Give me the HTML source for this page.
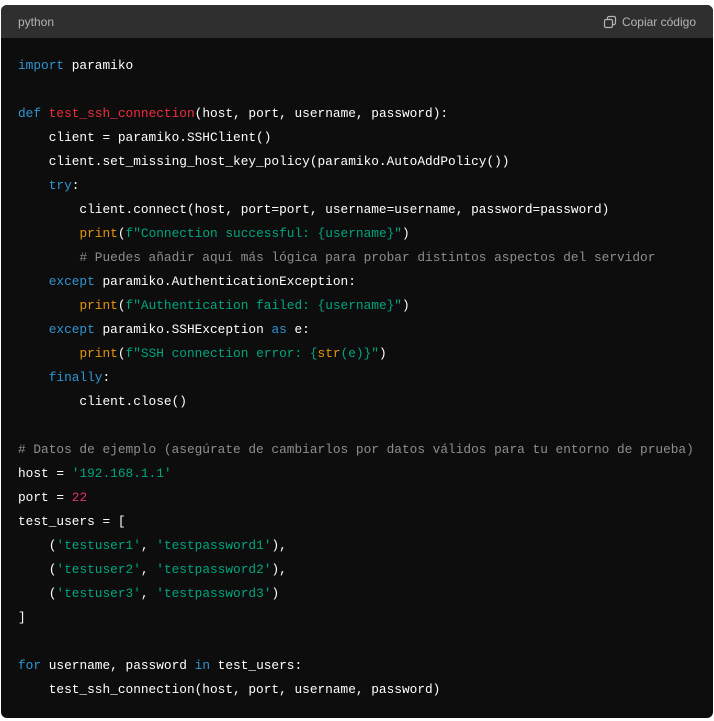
<!DOCTYPE html>
<html><head><meta charset="utf-8"><style>
html,body{margin:0;padding:0;background:#fff;width:714px;height:721px;overflow:hidden}
.box{position:absolute;left:1px;top:5px;width:712px;height:713px;border-radius:6px;overflow:hidden;background:#0d0d0d}
.hd{height:33px;background:#2f2f2f;font-family:"Liberation Sans",sans-serif;font-size:12px;color:#b4b4b4;position:relative}
.hd .l{position:absolute;left:17px;top:10px}
.hd .r{position:absolute;right:17px;top:10px}
.hd svg{position:absolute;left:-19px;top:0}
pre{margin:0;padding:16px 0 0 17px;font-family:"Liberation Mono",monospace;font-size:12.8px;line-height:24px;color:#fff;white-space:pre}
.k{color:#2e95d3}.f{color:#f22c3d}.s{color:#00a67d}.b{color:#e9950c}.n{color:#df3079}.c{color:#8e8e8e}
</style></head><body><div class="box">
<div class="hd"><span class="l">python</span><span class="r"><svg width="14" height="14" viewBox="0 0 14 14" fill="none" stroke="#b4b4b4" stroke-width="1.2"><rect x="1.5" y="4.5" width="8" height="8" rx="1.5"/><path d="M4.5 4.5V3a1.5 1.5 0 0 1 1.5-1.5h5A1.5 1.5 0 0 1 12.5 3v5A1.5 1.5 0 0 1 11 9.5H9.5"/></svg>Copiar código</span></div>
<pre><span class="k">import</span> paramiko

<span class="k">def</span> <span class="f">test_ssh_connection</span>(host, port, username, password):
    client = paramiko.SSHClient()
    client.set_missing_host_key_policy(paramiko.AutoAddPolicy())
    <span class="k">try</span>:
        client.connect(host, port=port, username=username, password=password)
        <span class="b">print</span>(<span class="s">f"Connection successful: {username}"</span>)
        <span class="c"># Puedes añadir aquí más lógica para probar distintos aspectos del servidor</span>
    <span class="k">except</span> paramiko.AuthenticationException:
        <span class="b">print</span>(<span class="s">f"Authentication failed: {username}"</span>)
    <span class="k">except</span> paramiko.SSHException <span class="k">as</span> e:
        <span class="b">print</span>(<span class="s">f"SSH connection error: {<span class="b">str</span>(e)}"</span>)
    <span class="k">finally</span>:
        client.close()

<span class="c"># Datos de ejemplo (asegúrate de cambiarlos por datos válidos para tu entorno de prueba)</span>
host = <span class="s">'192.168.1.1'</span>
port = <span class="n">22</span>
test_users = [
    (<span class="s">'testuser1'</span>, <span class="s">'testpassword1'</span>),
    (<span class="s">'testuser2'</span>, <span class="s">'testpassword2'</span>),
    (<span class="s">'testuser3'</span>, <span class="s">'testpassword3'</span>)
]

<span class="k">for</span> username, password <span class="k">in</span> test_users:
    test_ssh_connection(host, port, username, password)</pre>
</div></body></html>
